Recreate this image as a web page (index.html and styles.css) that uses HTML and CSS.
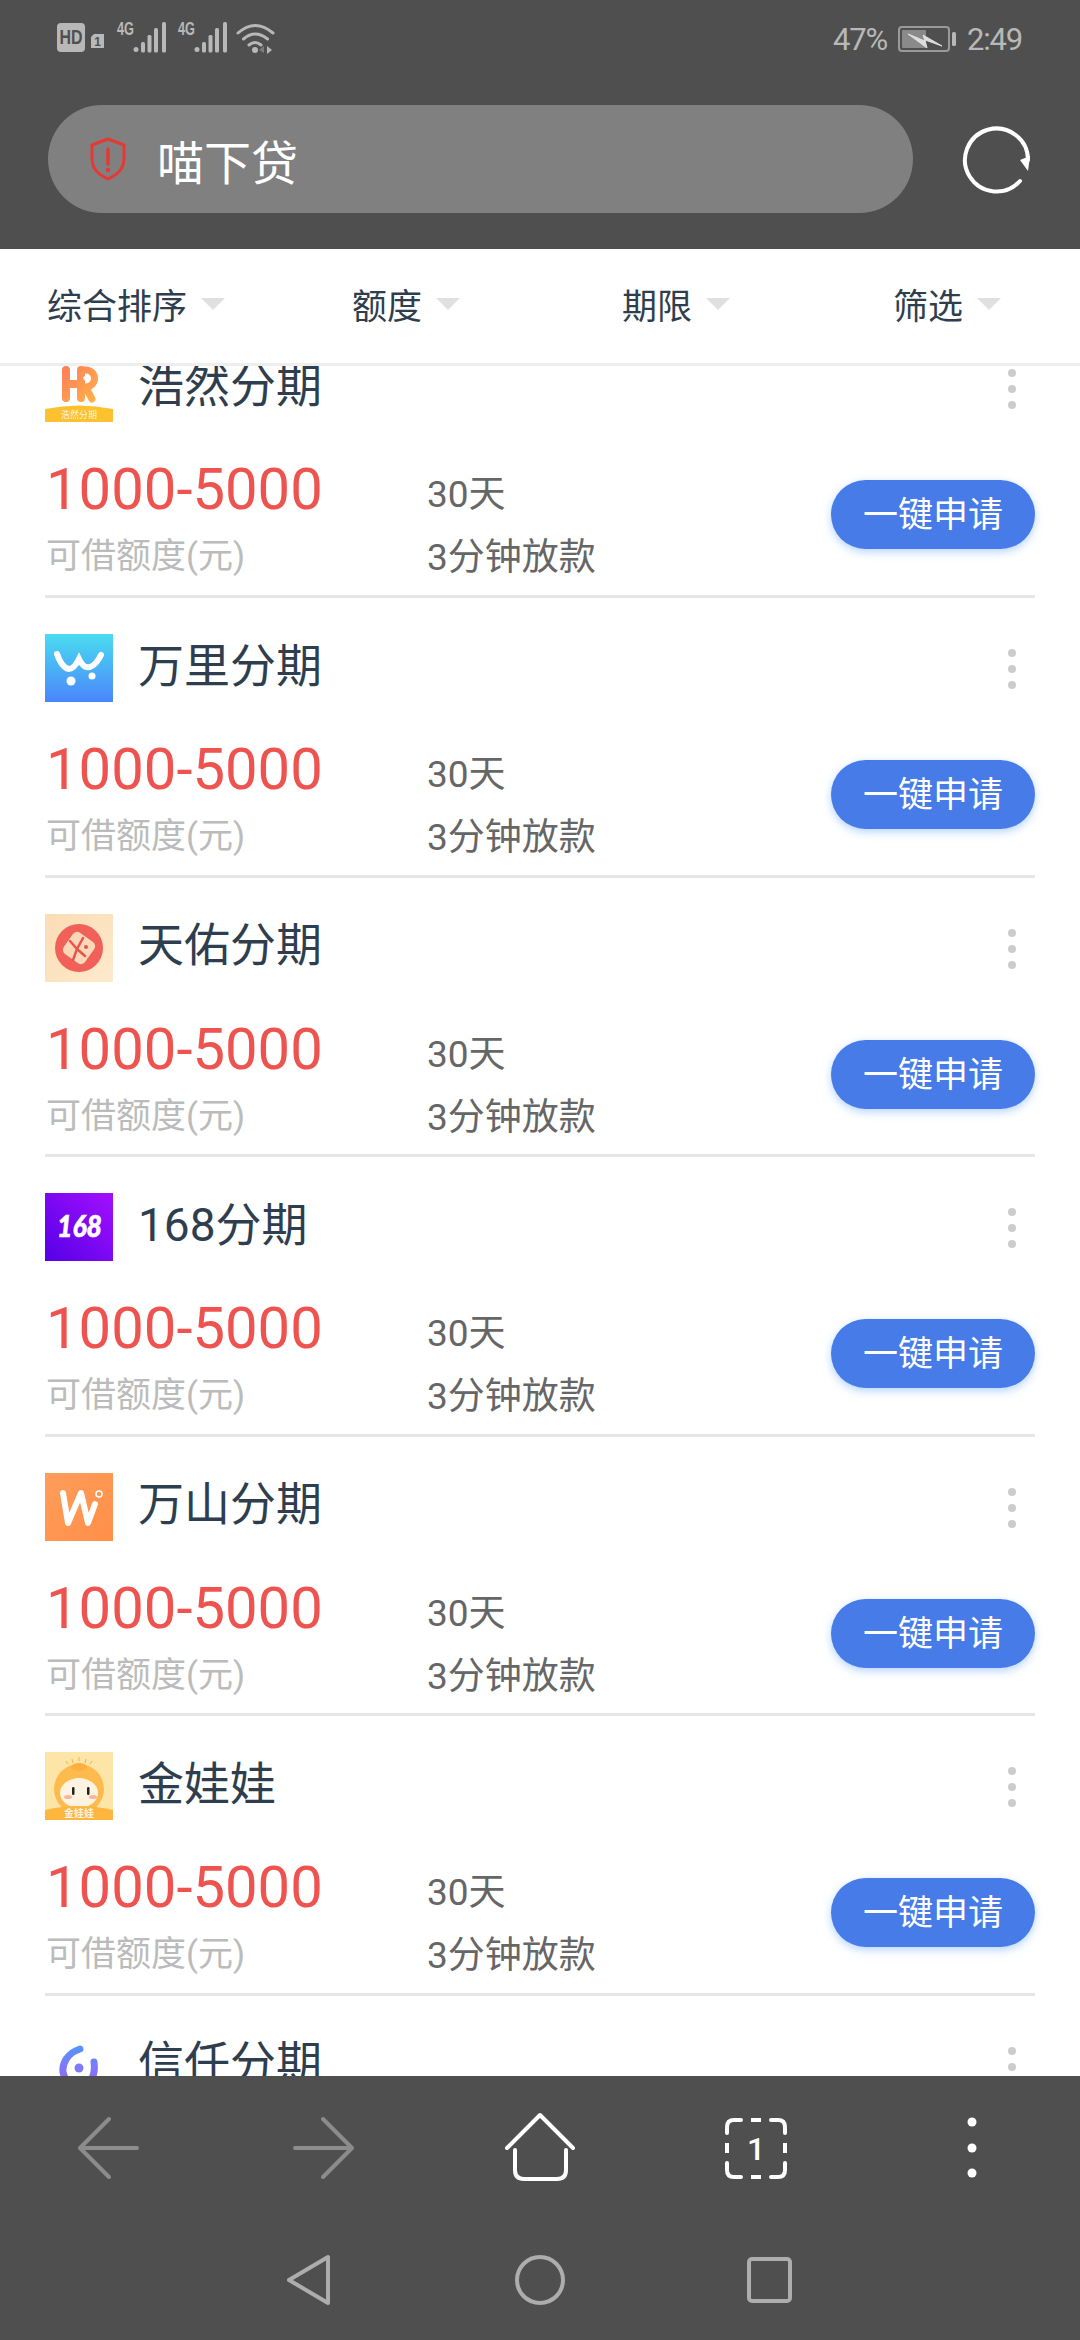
FILE: index.html
```html
<!DOCTYPE html>
<html lang="zh-CN">
<head>
    <meta charset="UTF-8" />
    <meta name="viewport" content="width=device-width, initial-scale=1" />
    <title>喵下贷</title>
    <link rel="stylesheet" href="styles.css">
</head>
<body>

<svg class="defs" width="0" height="0">
    <defs>
        <linearGradient id="hrGrad" gradientUnits="userSpaceOnUse" x1="15" y1="12" x2="52" y2="48">
            <stop offset="0" stop-color="#ff7a5c" />
            <stop offset="1" stop-color="#ffb347" />
        </linearGradient>
        <linearGradient id="wanliGrad" x1="0" y1="0" x2="0" y2="1">
            <stop offset="0" stop-color="#4adcf0" />
            <stop offset="1" stop-color="#4a86fb" />
        </linearGradient>
        <linearGradient id="tianyouGrad" x1="0" y1="0" x2="1" y2="1">
            <stop offset="0" stop-color="#fbdcb4" />
            <stop offset="1" stop-color="#fdeacb" />
        </linearGradient>
        <linearGradient id="purpleGrad" x1="0" y1="1" x2="1" y2="0">
            <stop offset="0" stop-color="#5400e6" />
            <stop offset="1" stop-color="#a410ff" />
        </linearGradient>
        <linearGradient id="wanshanGrad" x1="0" y1="0" x2="1" y2="1">
            <stop offset="0" stop-color="#ff9d5c" />
            <stop offset="1" stop-color="#ff8f48" />
        </linearGradient>
        <linearGradient id="xinrenGrad" x1="0" y1="0" x2="0" y2="1">
            <stop offset="0" stop-color="#5a92fa" />
            <stop offset="1" stop-color="#a25ff5" />
        </linearGradient>
    </defs>
</svg>

<header class="top">
    <div class="status">
        <svg class="status-icons" width="220" height="46" viewBox="56 12 220 46">
            <rect x="57" y="23" width="28" height="29" rx="4" fill="#b8b8b8" />
            <text x="59.500" y="44" class="hd" textLength="23" lengthAdjust="spacingAndGlyphs">HD</text>
            <path d="M91 37 l3 -3 h10 v14 h-13 z" fill="#b8b8b8" />
            <text x="97.500" y="46" class="sim">1</text>
            <text x="117" y="35" class="net" textLength="17" lengthAdjust="spacingAndGlyphs">4G</text>
            <g fill="#b8b8b8">
                <circle cx="136" cy="49.500" r="2.500" />
                <rect x="141" y="42" width="4" height="10.500" rx="1.500" />
                <rect x="147.500" y="35" width="4" height="17.500" rx="1.500" />
                <rect x="154" y="28" width="4" height="24.500" rx="1.500" />
                <rect x="162" y="22" width="4" height="30.500" rx="1.500" />
            </g>
            <text x="178" y="35" class="net" textLength="17" lengthAdjust="spacingAndGlyphs">4G</text>
            <g fill="#b8b8b8">
                <circle cx="197" cy="49.500" r="2.500" />
                <rect x="202" y="42" width="4" height="10.500" rx="1.500" />
                <rect x="208.500" y="35" width="4" height="17.500" rx="1.500" />
                <rect x="215" y="28" width="4" height="24.500" rx="1.500" />
                <rect x="223" y="22" width="4" height="30.500" rx="1.500" />
            </g>
            <g fill="none" stroke="#b8b8b8" stroke-width="3" stroke-linecap="round">
                <path d="M238 33 q17 -15 35 0" />
                <path d="M243.500 39 q11.500 -10 24 0" />
                <path d="M249 45 q6 -5 12 0" />
            </g>
            <circle cx="255" cy="50" r="3" fill="#b8b8b8" />
            <path d="M267 46 l5 4 l-5 4 z" fill="#b8b8b8" />
            <path d="M264 46 l-5 4 l5 3 z" fill="#7c7c7c" />
        </svg>
        <div class="status-right">
            <span>47%</span>
            <svg width="58" height="26" viewBox="0 0 58 26">
                <rect x="1" y="1" width="50" height="24" rx="3" fill="none" stroke="#9a9a9a" stroke-width="2" />
                <rect x="4" y="4" width="24" height="18" rx="1" fill="#8a8a8a" />
                <rect x="54" y="6" width="4" height="14" rx="1.500" fill="#b8b8b8" />
                <path d="M10 8 L27 15 L25 9 L44 20 L27 14 L29 22 Z" fill="#dedede" stroke="#dedede" stroke-width="1" stroke-linejoin="round" />
            </svg>
            <span>2:49</span>
        </div>
    </div>
    <div class="address">
        <div class="pill">
            <svg width="36" height="44" viewBox="0 0 36 44">
                <path d="M18 2 L34 8 V22 C34 31 27 38 18 42 C9 38 2 31 2 22 V8 Z" fill="none" stroke="#e53935" stroke-width="3" stroke-linejoin="round" />
                <path d="M18 12 V27" stroke="#e53935" stroke-width="3.500" stroke-linecap="round" />
                <circle cx="18" cy="33" r="2.300" fill="#e53935" />
            </svg>
            <span class="pill-text">喵下贷</span>
        </div>
        <svg class="reload" width="70" height="70" viewBox="961 124 70 70">
            <path d="M1019 181 A31.500 31.500 0 1 1 1027 160" fill="none" stroke="#fff" stroke-width="4" stroke-linecap="round" />
            <path d="M1019 160 L1029 156 L1027 171 Z" fill="#fff" />
        </svg>
    </div>
</header>

<nav class="filters">
    <div class="filter">综合排序<i class="caret"></i></div>
    <div class="filter">额度<i class="caret"></i></div>
    <div class="filter">期限<i class="caret"></i></div>
    <div class="filter">筛选<i class="caret"></i></div>
</nav>

<main class="list">
    <div class="list-inner">

        <section class="loan">
            <div class="loan-head">
                <svg class="logo" viewBox="0 0 68 68">
                    <g fill="none" stroke="url(#hrGrad)" stroke-width="8" stroke-linecap="round">
                        <path d="M21 16 V44" />
                        <path d="M36 16 V44" />
                        <path d="M21 30 H36" />
                        <path d="M36 16 H41 A8 8 0 0 1 41 33 H37" stroke-width="7" stroke-linecap="butt" />
                        <path d="M41 34 L47 45" stroke-width="7" />
                    </g>
                    <path d="M41 20 l3 4 l-3 4 l-3 -4 z" fill="#fff" />
                    <path d="M0 55 Q34 48 68 55 V68 H0 Z" fill="#fcc12f" />
                    <text x="34" y="63.500" class="logo-tiny">浩然分期</text>
                </svg>
                <h2>浩然分期</h2>
                <div class="more"><i></i><i></i><i></i></div>
            </div>
            <div class="loan-body">
                <div class="amount">
                    <div class="sum">1000-5000</div>
                    <div class="sum-label">可借额度(元)</div>
                </div>
                <div class="terms">
                    <div>30天</div>
                    <div>3分钟放款</div>
                </div>
                <button class="apply">一键申请</button>
            </div>
        </section>

        <section class="loan">
            <div class="loan-head">
                <svg class="logo" viewBox="0 0 68 68">
                    <rect width="68" height="68" fill="url(#wanliGrad)" />
                    <path d="M12 20 Q17 34 24 35 Q29 35 34 25 Q39 35 45 33 Q51 31 56 21" fill="none" stroke="#fff" stroke-width="6" stroke-linecap="round" />
                    <circle cx="26" cy="47" r="4.500" fill="#fff" />
                    <circle cx="47" cy="42" r="3.500" fill="#fff" />
                </svg>
                <h2>万里分期</h2>
                <div class="more"><i></i><i></i><i></i></div>
            </div>
            <div class="loan-body">
                <div class="amount">
                    <div class="sum">1000-5000</div>
                    <div class="sum-label">可借额度(元)</div>
                </div>
                <div class="terms">
                    <div>30天</div>
                    <div>3分钟放款</div>
                </div>
                <button class="apply">一键申请</button>
            </div>
        </section>

        <section class="loan">
            <div class="loan-head">
                <svg class="logo" viewBox="0 0 68 68">
                    <rect width="68" height="68" fill="url(#tianyouGrad)" />
                    <circle cx="34" cy="34" r="24" fill="#f2605a" />
                    <rect x="21" y="21" width="26" height="26" rx="5" transform="rotate(35 34 34)" fill="#fbd8b8" />
                    <path d="M25 27 L32 35 L38 24 M32 35 L28 46 M32 35 L40 42" fill="none" stroke="#e8534c" stroke-width="2.500" stroke-linecap="round" stroke-linejoin="round" />
                    <circle cx="41" cy="33" r="2" fill="#e8534c" />
                </svg>
                <h2>天佑分期</h2>
                <div class="more"><i></i><i></i><i></i></div>
            </div>
            <div class="loan-body">
                <div class="amount">
                    <div class="sum">1000-5000</div>
                    <div class="sum-label">可借额度(元)</div>
                </div>
                <div class="terms">
                    <div>30天</div>
                    <div>3分钟放款</div>
                </div>
                <button class="apply">一键申请</button>
            </div>
        </section>

        <section class="loan">
            <div class="loan-head">
                <svg class="logo" viewBox="0 0 68 68">
                    <rect width="68" height="68" fill="url(#purpleGrad)" />
                    <text x="12" y="44" class="logo-168" textLength="45" lengthAdjust="spacingAndGlyphs">168</text>
                </svg>
                <h2>168分期</h2>
                <div class="more"><i></i><i></i><i></i></div>
            </div>
            <div class="loan-body">
                <div class="amount">
                    <div class="sum">1000-5000</div>
                    <div class="sum-label">可借额度(元)</div>
                </div>
                <div class="terms">
                    <div>30天</div>
                    <div>3分钟放款</div>
                </div>
                <button class="apply">一键申请</button>
            </div>
        </section>

        <section class="loan">
            <div class="loan-head">
                <svg class="logo" viewBox="0 0 68 68">
                    <rect width="68" height="68" fill="url(#wanshanGrad)" />
                    <path d="M18 20 L23 50 L36 20 L43 50 L50 31" fill="none" stroke="#fff" stroke-width="6" stroke-linecap="round" stroke-linejoin="round" />
                    <circle cx="54" cy="21" r="3" fill="none" stroke="#fff" stroke-width="1.500" />
                </svg>
                <h2>万山分期</h2>
                <div class="more"><i></i><i></i><i></i></div>
            </div>
            <div class="loan-body">
                <div class="amount">
                    <div class="sum">1000-5000</div>
                    <div class="sum-label">可借额度(元)</div>
                </div>
                <div class="terms">
                    <div>30天</div>
                    <div>3分钟放款</div>
                </div>
                <button class="apply">一键申请</button>
            </div>
        </section>

        <section class="loan">
            <div class="loan-head">
                <svg class="logo" viewBox="0 0 68 68">
                    <rect width="68" height="68" fill="#fde5a8" />
                    <path d="M27 7 l1 4 M34 5 v4 M41 7 l-1 4 M21 9 l2 3 M47 9 l-2 3" stroke="#f5b13f" stroke-width="1" />
                    <circle cx="34" cy="37" r="25" fill="#fdbb4e" />
                    <ellipse cx="34" cy="15" rx="8" ry="4" fill="#fdb040" />
                    <ellipse cx="34" cy="41" rx="19" ry="15" fill="#fdf3e0" />
                    <rect x="27" y="35" width="2.500" height="8" rx="1.200" fill="#222" />
                    <rect x="42" y="35" width="2.500" height="8" rx="1.200" fill="#222" />
                    <ellipse cx="23" cy="45" rx="4" ry="2" fill="#f8b5a0" />
                    <ellipse cx="48" cy="45" rx="4" ry="2" fill="#f8b5a0" />
                    <path d="M0 58 Q34 50 68 58 V68 H0 Z" fill="#fdb73f" />
                    <text x="34" y="65" class="logo-tiny gold">金娃娃</text>
                </svg>
                <h2>金娃娃</h2>
                <div class="more"><i></i><i></i><i></i></div>
            </div>
            <div class="loan-body">
                <div class="amount">
                    <div class="sum">1000-5000</div>
                    <div class="sum-label">可借额度(元)</div>
                </div>
                <div class="terms">
                    <div>30天</div>
                    <div>3分钟放款</div>
                </div>
                <button class="apply">一键申请</button>
            </div>
        </section>

        <section class="loan">
            <div class="loan-head">
                <svg class="logo" viewBox="0 0 68 68">
                    <path d="M35 17 C22 21 17 32 18 40 C20 50 28 55 36 54 C45 53 51 44 49 30" fill="none" stroke="url(#xinrenGrad)" stroke-width="7" stroke-linecap="round" />
                    <circle cx="34" cy="36" r="4.500" fill="#7f7cf7" />
                </svg>
                <h2>信任分期</h2>
                <div class="more"><i></i><i></i><i></i></div>
            </div>
        </section>

    </div>
</main>

<footer class="bottom">
    <svg class="bottom-icons" width="1080" height="264" viewBox="0 2076 1080 264">
        <g fill="none" stroke="#8c8c8c" stroke-width="4" stroke-linecap="round" stroke-linejoin="round">
            <path d="M137 2148 H80 M109 2119 L80 2148 L109 2177" />
            <path d="M295 2148 H352 M323 2119 L352 2148 L323 2177" />
        </g>
        <g fill="none" stroke="#fff" stroke-width="4" stroke-linecap="round" stroke-linejoin="round">
            <path d="M507 2148 L540 2115 L573 2148" />
            <path d="M515 2150 V2170 Q515 2179 524 2179 H557 Q566 2179 566 2170 V2150" />
            <path d="M727 2133 V2127 Q727 2120 734 2120 H741" />
            <path d="M771 2120 H778 Q785 2120 785 2127 V2133" />
            <path d="M785 2163 V2170 Q785 2177 778 2177 H771" />
            <path d="M741 2177 H734 Q727 2177 727 2170 V2163" />
            <path d="M751 2120 H761 M751 2177 H761 M727 2143 V2153 M785 2143 V2153" stroke-linecap="butt" />
        </g>
        <text x="756" y="2160" class="tab-count">1</text>
        <g fill="#fff">
            <circle cx="972" cy="2122" r="4.500" />
            <circle cx="972" cy="2148" r="4.500" />
            <circle cx="972" cy="2173" r="4.500" />
        </g>
        <g fill="none" stroke="#adadad" stroke-width="4" stroke-linejoin="round">
            <path d="M289 2280 L328 2257 V2303 Z" />
            <circle cx="540" cy="2280" r="23" />
            <rect x="749" y="2259" width="41" height="42" rx="3" />
        </g>
    </svg>
</footer>

</body>
</html>
```

FILE: styles.css
```css
html, body {
    margin: 0;
    padding: 0;
}
body {
    width: 1080px;
    height: 2340px;
    display: flex;
    flex-direction: column;
    overflow: hidden;
    background: white;
    font-family: Roboto, "Noto Sans CJK SC", sans-serif;
}
.defs {
    position: absolute;
}

/* top bar */
.top {
    height: 249px;
    background: #4f4f4f;
    flex-shrink: 0;
}
.status {
    height: 105px;
    display: flex;
    justify-content: space-between;
    align-items: flex-start;
    padding: 12px 58px 0 56px;
    box-sizing: border-box;
}
.status-icons {
    display: block;
}
.hd {
    font: bold 20px "Liberation Sans", sans-serif;
    fill: #4f4f4f;
}
.sim {
    font: bold 12px "Liberation Sans", sans-serif;
    fill: #4f4f4f;
    text-anchor: middle;
}
.net {
    font: bold 18px "Liberation Sans", sans-serif;
    fill: #b8b8b8;
}
.status-right {
    display: flex;
    align-items: center;
    gap: 11px;
    height: 32px;
    margin-top: 11px;
    color: #b8b8b8;
    font-size: 31px;
    letter-spacing: -1.2px;
}
.address {
    display: flex;
    align-items: center;
    padding-left: 48px;
}
.pill {
    width: 865px;
    height: 108px;
    border-radius: 54px;
    background: #808080;
    display: flex;
    align-items: center;
    padding-left: 42px;
    box-sizing: border-box;
}
.pill-text {
    margin-left: 31px;
    font-size: 47px;
    color: #fff;
}
.reload {
    margin-left: 49px;
}

/* filters */
.filters {
    height: 117px;
    flex-shrink: 0;
    display: grid;
    grid-template-columns: 305px 270px 271px auto;
    align-items: center;
    padding: 0 0 5px 47px;
    box-sizing: border-box;
    border-bottom: 3px solid #eee;
    background: white;
}
.filter {
    display: flex;
    align-items: center;
    font-size: 35px;
    color: #2f3e4e;
}
.caret {
    width: 0;
    height: 0;
    margin-left: 14px;
    border-left: 12px solid transparent;
    border-right: 12px solid transparent;
    border-top: 12px solid #e0e0e0;
}

/* list */
.list {
    flex: 1;
    overflow: hidden;
}
.list-inner {
    margin-top: -47.6px;
}
.loan {
    margin: 0 45px;
    padding: 36px 0 16.6px;
    border-bottom: 3px solid #e6e6e6;
}
.loan-head {
    height: 68px;
    display: flex;
    align-items: center;
}
.logo {
    width: 68px;
    height: 68px;
    flex-shrink: 0;
}
.logo-tiny {
    font: 9px "Noto Sans CJK SC", sans-serif;
    fill: #fff;
    fill-opacity: 0.85;
    text-anchor: middle;
}
.gold {
    font-size: 10px;
    font-weight: bold;
}
.logo-168 {
    font: italic 900 30px Lato, sans-serif;
    fill: #fff;
    stroke: #fff;
    stroke-width: 0.6px;
}
h2 {
    margin: 0 0 13px 25px;
    font-size: 46px;
    font-weight: normal;
    color: #2f3e4e;
    flex: 1;
}
.more {
    display: flex;
    flex-direction: column;
    gap: 8px;
    margin: 2px 19px 0 0;
}
.more i {
    width: 8px;
    height: 8px;
    border-radius: 50%;
    background: #ccc;
}
.loan-body {
    display: flex;
    align-items: center;
    margin-top: 32px;
    height: 124px;
}
.amount {
    width: 382px;
    padding-left: 1px;
    box-sizing: border-box;
    align-self: stretch;
}
.sum {
    padding-top: 2px;
    font-size: 58px;
    line-height: 66px;
    color: #ef5350;
}
.sum-label {
    margin-top: 14px;
    font-size: 35px;
    line-height: 42px;
    color: #bbb;
}
.terms {
    align-self: flex-end;
    display: flex;
    flex-direction: column;
    gap: 21px;
    margin-bottom: -1px;
    font-size: 37px;
    line-height: 42px;
    color: #666;
}
.apply {
    margin: -3px 0 0 auto;
    width: 204px;
    height: 69px;
    border: none;
    border-radius: 35px;
    background: #477be8;
    color: white;
    font-family: inherit;
    font-size: 35px;
    padding: 0 0 6px;
    box-shadow: 0 3px 8px rgba(90,160,255,0.45);
}

/* bottom bars */
.bottom {
    height: 264px;
    flex-shrink: 0;
    background: #4f4f4f;
}
.bottom-icons {
    display: block;
}
.tab-count {
    font: 500 32px Roboto, sans-serif;
    fill: #fff;
    text-anchor: middle;
}
```
